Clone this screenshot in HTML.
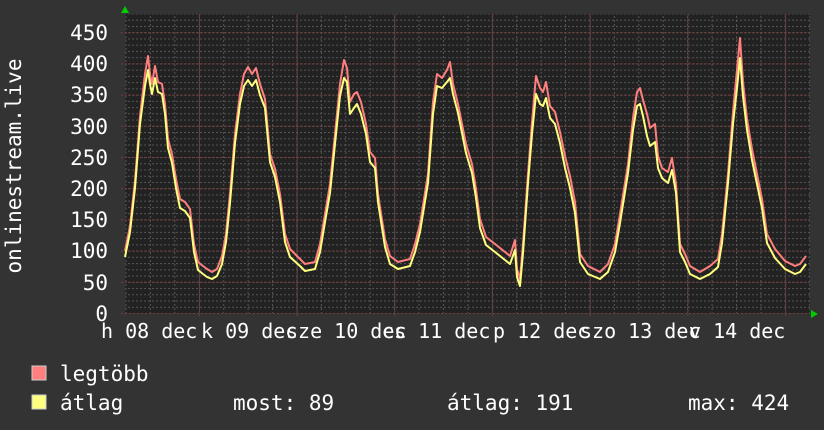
<!DOCTYPE html>
<html><head><meta charset="utf-8"><style>
html,body{margin:0;padding:0;background:#333;}
body{width:824px;height:430px;overflow:hidden;position:relative;}
svg{position:absolute;left:0;top:0;}
text{font-family:"DejaVu Sans Mono","Liberation Mono",monospace;font-size:20px;fill:#fff;}
text.b{font-size:21px;}
</style></head><body>
<svg width="824" height="430" viewBox="0 0 824 430">
<defs>
<pattern id="gh" patternUnits="userSpaceOnUse" x="0" y="313" width="4" height="6.24">
<rect x="0" y="0" width="2" height="1" fill="#555"/>
</pattern>
<pattern id="gv" patternUnits="userSpaceOnUse" x="125.5" y="0" width="24.42" height="4">
<rect x="0" y="0" width="1" height="2" fill="#555"/>
</pattern>
</defs>
<rect x="0" y="0" width="824" height="430" fill="#333"/>
<rect x="125" y="14" width="685" height="299" fill="#222"/>
<rect x="125" y="14" width="685" height="299" fill="url(#gh)"/>
<rect x="125" y="14" width="685" height="299" fill="url(#gv)"/>
<g stroke="#7a3a3a" stroke-width="1" stroke-dasharray="2,2">
<line x1="121" x2="810" y1="313.5" y2="313.5"/>
<line x1="121" x2="810" y1="282.3" y2="282.3"/>
<line x1="121" x2="810" y1="251.1" y2="251.1"/>
<line x1="121" x2="810" y1="219.9" y2="219.9"/>
<line x1="121" x2="810" y1="188.7" y2="188.7"/>
<line x1="121" x2="810" y1="157.5" y2="157.5"/>
<line x1="121" x2="810" y1="126.3" y2="126.3"/>
<line x1="121" x2="810" y1="95.1" y2="95.1"/>
<line x1="121" x2="810" y1="63.9" y2="63.9"/>
<line x1="121" x2="810" y1="32.7" y2="32.7"/>
<line y1="14" y2="317" x1="199.5" x2="199.5"/>
<line y1="14" y2="317" x1="297.2" x2="297.2"/>
<line y1="14" y2="317" x1="394.9" x2="394.9"/>
<line y1="14" y2="317" x1="492.6" x2="492.6"/>
<line y1="14" y2="317" x1="590.3" x2="590.3"/>
<line y1="14" y2="317" x1="688" x2="688"/>
<line y1="14" y2="317" x1="785.7" x2="785.7"/>
</g>
<g fill="none" stroke-width="2" stroke-linejoin="round">
<polyline stroke="#ff7f7f" transform="translate(0,-4)" points="125,255 130,230 135,185 140,120 145,78 148,60 150,78 152,88 155,70 158,86 162,88 165,108 168,143 172,158 176,183 180,203 185,206 190,213 194,248 198,266 203,270 207,273 212,276 217,273 222,260 226,238 230,198 235,138 240,98 244,78 248,71 252,78 256,72 260,88 265,103 270,158 275,173 280,198 285,238 290,253 300,263 305,268 315,266 320,248 325,218 330,188 336,128 340,88 344,64 347,72 350,106 354,98 357,96 361,106 366,128 370,156 375,162 378,198 385,243 390,260 398,266 410,263 415,248 420,228 428,178 433,106 437,78 442,82 447,74 450,66 453,88 458,108 462,128 466,148 472,168 476,193 480,223 486,241 495,248 505,256 510,260 515,244 517,273 520,283 523,248 528,178 532,126 536,80 540,92 543,96 546,86 550,110 555,116 560,136 565,160 570,180 575,206 580,258 588,270 600,276 608,268 615,248 620,218 628,168 633,122 637,96 640,92 643,104 647,118 650,132 655,128 658,160 662,172 668,176 672,162 676,188 680,248 685,258 690,270 700,276 710,270 718,263 722,238 728,178 733,116 737,74 740,42 743,86 747,123 752,153 757,178 762,203 767,238 775,253 785,265 795,270 800,268 806,260"/>
<polyline stroke="#ffff7f" points="125,257 130,232 135,188 140,124 145,86 148,70 150,84 152,94 155,78 158,92 162,94 165,114 168,148 172,163 176,188 180,208 185,211 190,218 194,252 198,270 203,274 207,277 212,279 217,276 222,264 226,242 230,203 235,143 240,104 244,86 248,80 252,86 256,80 260,95 265,108 270,162 275,177 280,202 285,242 290,257 300,266 305,271 315,269 320,252 325,222 330,193 336,134 340,96 344,78 347,82 350,114 354,108 357,104 361,114 366,134 370,162 375,168 378,202 385,247 390,264 398,269 410,266 415,252 420,232 428,183 433,114 437,86 442,88 447,82 450,78 453,94 458,113 462,133 466,153 472,173 476,198 480,228 486,245 495,252 505,260 510,264 515,250 517,277 520,286 523,253 528,183 532,134 536,94 540,104 543,106 546,98 550,118 555,124 560,143 565,168 570,188 575,213 580,262 588,274 600,279 608,272 615,252 620,223 628,173 633,130 637,106 640,104 643,116 647,136 650,146 655,142 658,168 662,178 668,183 672,170 676,193 680,252 685,262 690,274 700,279 710,274 718,267 722,243 728,183 733,124 737,88 740,58 743,96 747,130 752,160 757,184 762,208 767,243 775,258 785,269 795,274 800,272 806,264"/>
</g>
<polygon points="121,13 125,6 129,13" fill="#0c0"/>
<polygon points="811,310 818,314 811,318" fill="#0c0"/>
<g text-anchor="end">
<text class="b" x="108" y="40">450</text>
<text class="b" x="108" y="71">400</text>
<text class="b" x="108" y="102">350</text>
<text class="b" x="108" y="134">300</text>
<text class="b" x="108" y="165">250</text>
<text class="b" x="108" y="196">200</text>
<text class="b" x="108" y="227">150</text>
<text class="b" x="108" y="258">100</text>
<text class="b" x="108" y="290">50</text>
<text class="b" x="108" y="321">0</text>
</g>
<text x="101" y="338">h 08 dec</text>
<text x="201" y="338">k 09 dec</text>
<text x="286" y="338">sze 10 dec</text>
<text x="382" y="338">cs 11 dec</text>
<text x="493" y="338">p 12 dec</text>
<text x="580" y="338">szo 13 dec</text>
<text x="689" y="338">v 14 dec</text>
<text class="b" transform="translate(21,166) rotate(-90)" text-anchor="middle">onlinestream.live</text>
<rect x="32" y="366" width="14" height="14" fill="#ff7f7f" stroke="#ccc" stroke-width="1"/>
<text class="b" x="60" y="381">legtöbb</text>
<rect x="32" y="395" width="14" height="14" fill="#ffff7f" stroke="#ccc" stroke-width="1"/>
<text class="b" x="60" y="410">átlag</text>
<text class="b" x="233" y="410">most: 89</text>
<text class="b" x="447" y="410">átlag: 191</text>
<text class="b" x="688" y="410">max: 424</text>
</svg>
</body></html>
